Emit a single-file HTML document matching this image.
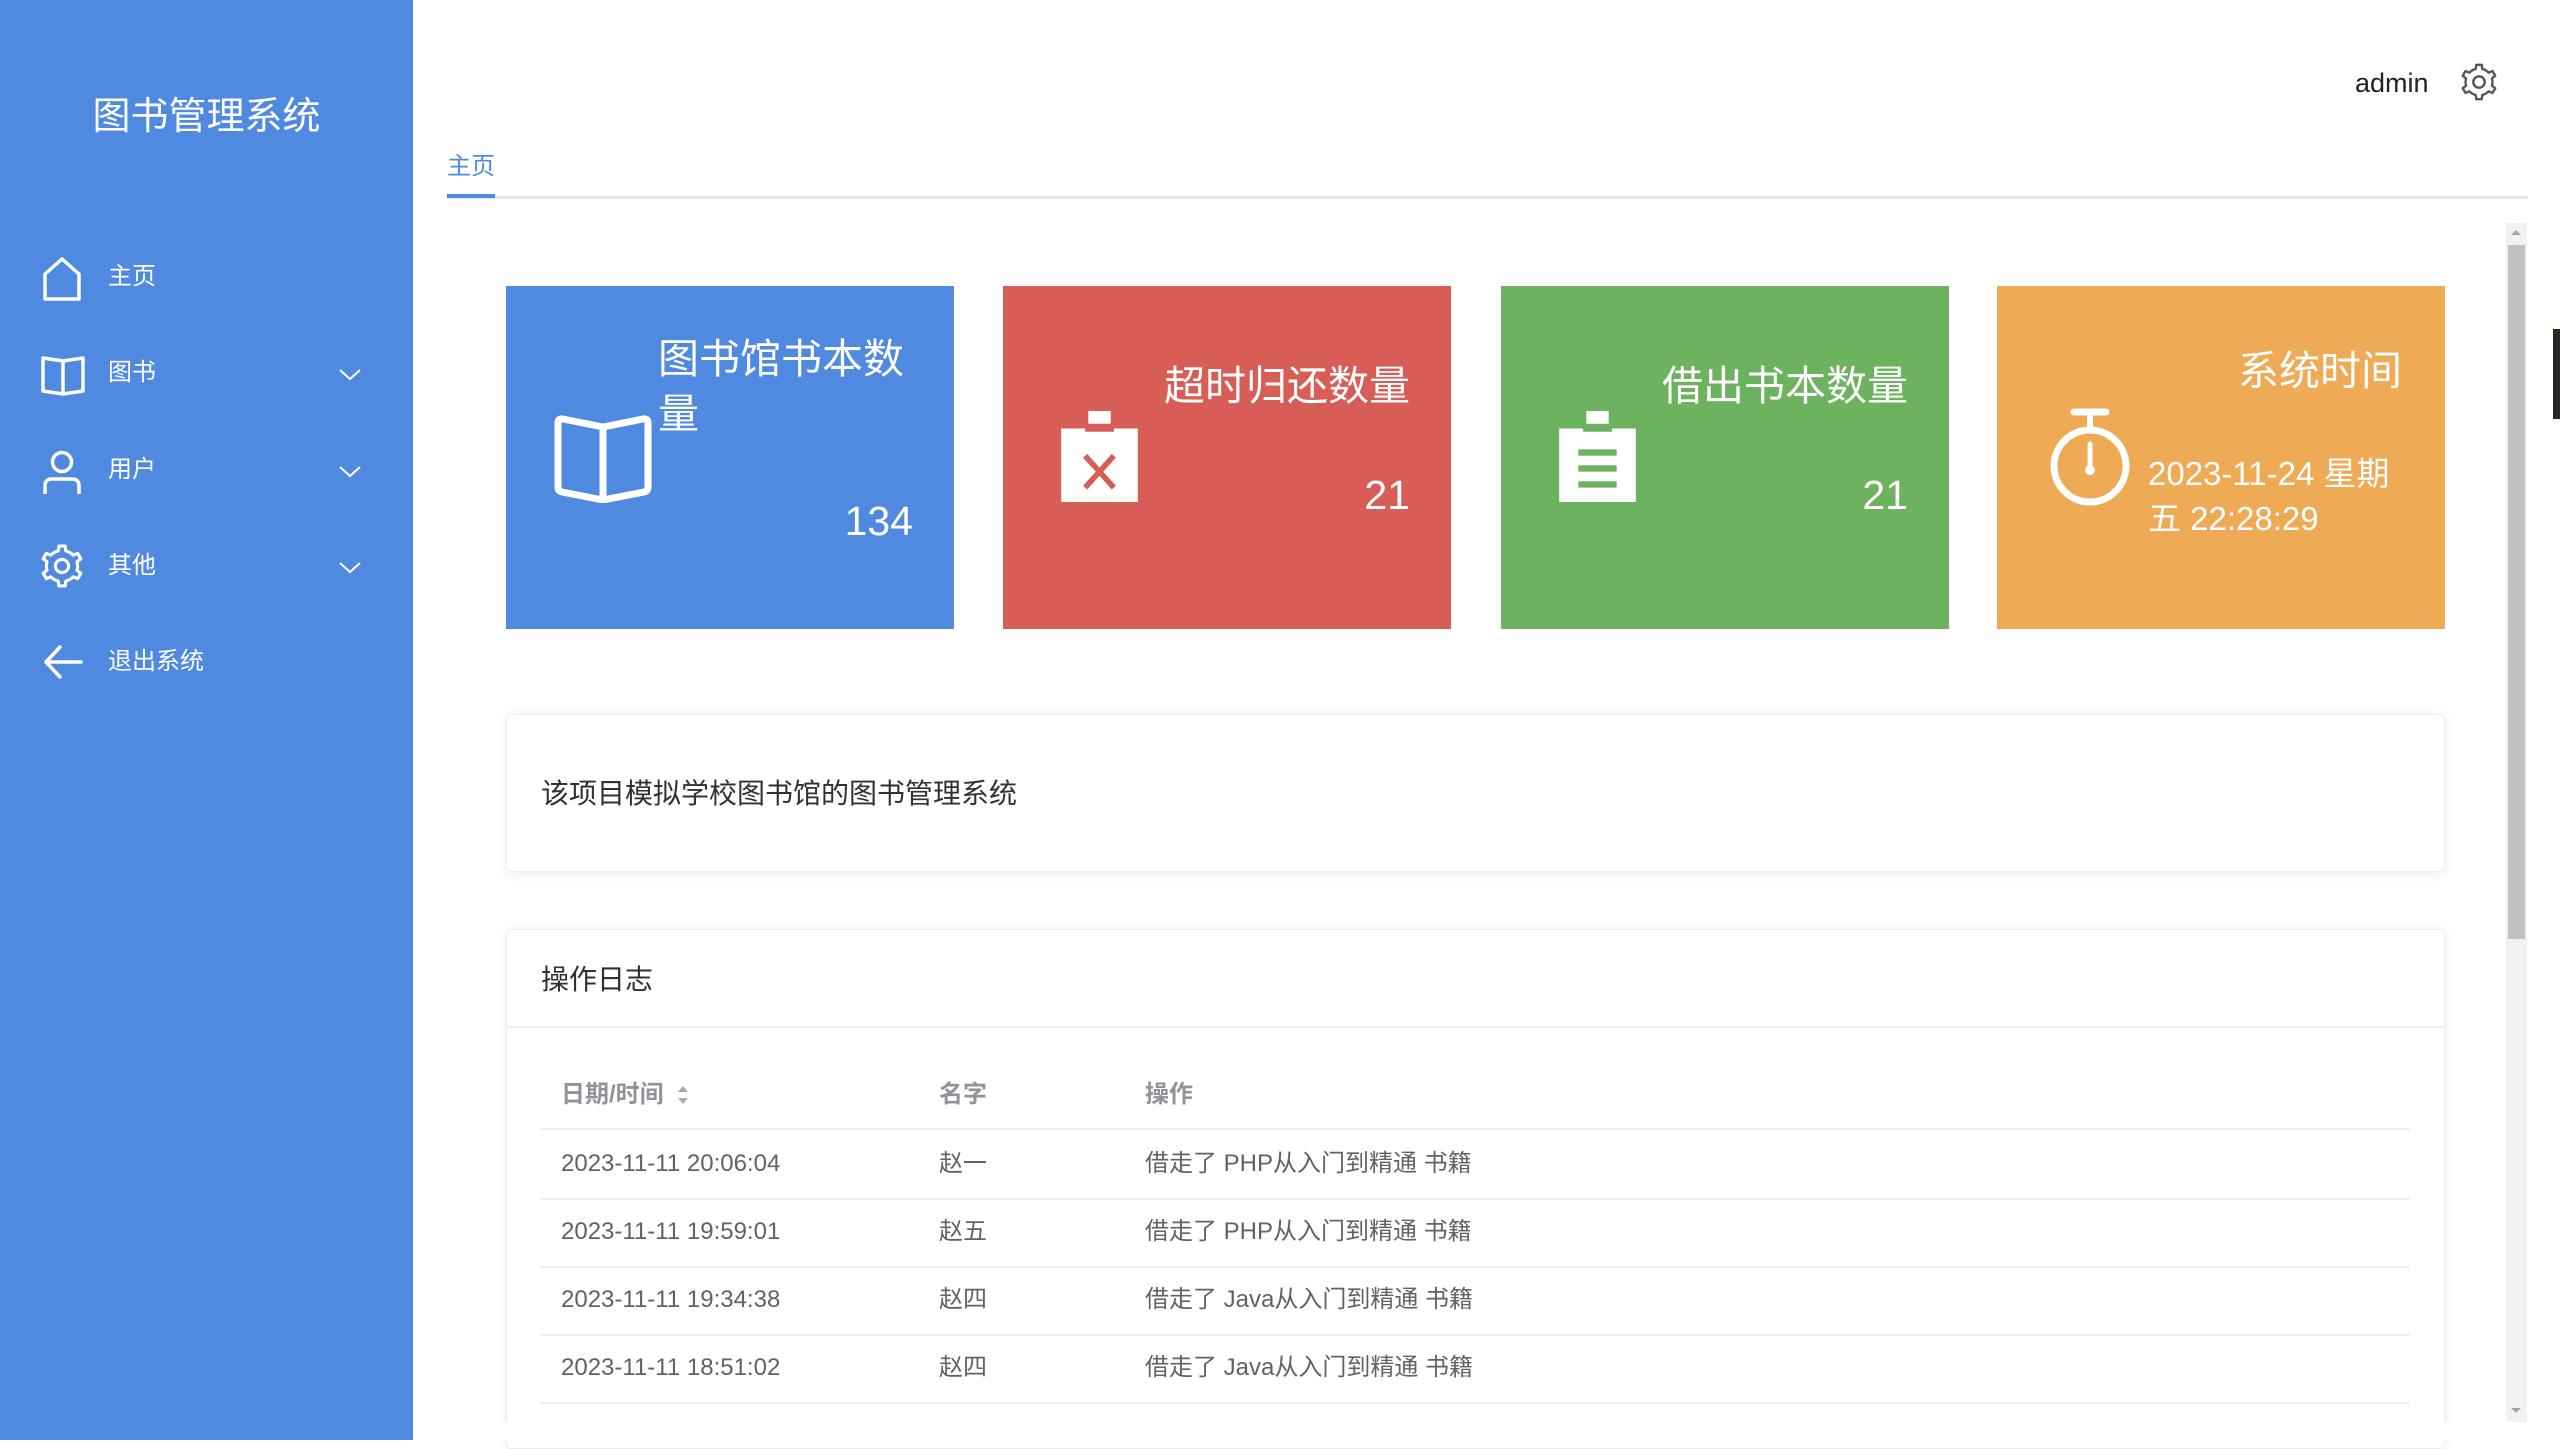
<!DOCTYPE html>
<html><head><meta charset="utf-8">
<style>
*{margin:0;padding:0;box-sizing:border-box}
body{width:2560px;height:1440px;position:relative;overflow:hidden;background:#fff;font-family:"Liberation Sans","Noto Sans CJK SC",sans-serif;}
.a{position:absolute;white-space:nowrap}
#side{position:absolute;left:0;top:0;width:413px;height:1440px;background:#4f8ae0}
.mt{position:absolute;left:108px;color:#fff;font-size:24px;line-height:30px}
.card{position:absolute;top:286px;width:448px;height:343px;color:#fff}
.ct{position:absolute;font-size:41px;line-height:55px;right:41px;text-align:right}
.cn{position:absolute;font-size:41px;line-height:50px;right:41px}
.row{position:absolute;left:541px;width:1869px;height:68px;border-bottom:2px solid #ebeef5;font-size:24px;color:#606266}
.row span{position:absolute;top:17px;line-height:30px;height:30px;display:block}
</style></head><body>
<div id="side">
  <div class="a" style="left:0;width:413px;text-align:center;top:93px;font-size:38px;line-height:48px;color:#fff">图书管理系统</div>
  <svg class="a" style="left:42px;top:256px" width="40" height="46" viewBox="0 0 40 46"><path d="M3 18 L20 3 L37 18 V43 H3 Z" fill="none" stroke="#fff" stroke-width="3.5" stroke-linejoin="round"/></svg>
  <div class="mt" style="top:262px">主页</div>
  <svg class="a" style="left:40px;top:355px" width="46" height="42" viewBox="0 0 46 42"><path d="M3 3 L23 6 L43 3 V36 L23 39 L3 36 Z M23 6 V39" fill="none" stroke="#fff" stroke-width="3.5" stroke-linejoin="round"/></svg>
  <div class="mt" style="top:358px">图书</div>
  <svg class="a" style="left:339px;top:369px" width="22" height="12" viewBox="0 0 22 12"><path d="M1 1 L11 10 L21 1" fill="none" stroke="#fff" stroke-width="2"/></svg>
  <svg class="a" style="left:42px;top:450px" width="40" height="46" viewBox="0 0 40 46"><circle cx="20" cy="12" r="9.5" fill="none" stroke="#fff" stroke-width="3.5"/><path d="M3 44 V36 Q3 29 10 29 H30 Q37 29 37 36 V44" fill="none" stroke="#fff" stroke-width="3.5"/></svg>
  <div class="mt" style="top:455px">用户</div>
  <svg class="a" style="left:339px;top:466px" width="22" height="12" viewBox="0 0 22 12"><path d="M1 1 L11 10 L21 1" fill="none" stroke="#fff" stroke-width="2"/></svg>
  <svg class="a" style="left:40px;top:543px" width="44" height="46" viewBox="0 0 24 24"><path d="M9.94 3.75 L10.28 1.13 L13.72 1.13 L14.06 3.75 A8.5 8.5 0 0 1 18.11 6.09 L20.55 5.08 L22.27 8.05 L20.17 9.66 A8.5 8.5 0 0 1 20.17 14.34 L22.27 15.95 L20.55 18.92 L18.11 17.91 A8.5 8.5 0 0 1 14.06 20.25 L13.72 22.87 L10.28 22.87 L9.94 20.25 A8.5 8.5 0 0 1 5.89 17.91 L3.45 18.92 L1.73 15.95 L3.83 14.34 A8.5 8.5 0 0 1 3.83 9.66 L1.73 8.05 L3.45 5.08 L5.89 6.09 A8.5 8.5 0 0 1 9.94 3.75 Z" fill="none" stroke="#fff" stroke-width="1.7" stroke-linejoin="round"/><circle cx="12" cy="12" r="3.6" fill="none" stroke="#fff" stroke-width="1.7"/></svg>
  <div class="mt" style="top:551px">其他</div>
  <svg class="a" style="left:339px;top:562px" width="22" height="12" viewBox="0 0 22 12"><path d="M1 1 L11 10 L21 1" fill="none" stroke="#fff" stroke-width="2"/></svg>
  <svg class="a" style="left:43px;top:645px" width="40" height="34" viewBox="0 0 40 34"><path d="M38 17 H3 M17 2 L3 17 L17 32" fill="none" stroke="#fff" stroke-width="3.5" stroke-linecap="round" stroke-linejoin="round"/></svg>
  <div class="mt" style="top:647px">退出系统</div>
</div>

<div class="a" style="left:2355px;top:66px;font-size:27px;line-height:34px;color:#222">admin</div>
<svg class="a" style="left:2460px;top:63px" width="38" height="38" viewBox="0 0 24 24"><path d="M9.94 3.75 L10.28 1.13 L13.72 1.13 L14.06 3.75 A8.5 8.5 0 0 1 18.11 6.09 L20.55 5.08 L22.27 8.05 L20.17 9.66 A8.5 8.5 0 0 1 20.17 14.34 L22.27 15.95 L20.55 18.92 L18.11 17.91 A8.5 8.5 0 0 1 14.06 20.25 L13.72 22.87 L10.28 22.87 L9.94 20.25 A8.5 8.5 0 0 1 5.89 17.91 L3.45 18.92 L1.73 15.95 L3.83 14.34 A8.5 8.5 0 0 1 3.83 9.66 L1.73 8.05 L3.45 5.08 L5.89 6.09 A8.5 8.5 0 0 1 9.94 3.75 Z" fill="none" stroke="#555" stroke-width="1.5" stroke-linejoin="round"/><circle cx="12" cy="12" r="3.6" fill="none" stroke="#555" stroke-width="1.5"/></svg>

<div class="a" style="left:447px;top:152px;font-size:24px;line-height:30px;color:#4f8ae0">主页</div>
<div class="a" style="left:447px;top:196px;width:2081px;height:3px;background:#e4e7ed"></div>
<div class="a" style="left:447px;top:194px;width:48px;height:4px;background:#4f8ae0"></div>

<div class="a" style="left:2506px;top:223px;width:21px;height:1199px;background:#f1f1f1"></div>
<div class="a" style="left:2508px;top:245px;width:17px;height:694px;background:#c1c1c1"></div>
<div class="a" style="left:2511px;top:230px;width:0;height:0;border-left:5px solid transparent;border-right:5px solid transparent;border-bottom:5px solid #a3a3a3"></div>
<div class="a" style="left:2511px;top:1408px;width:0;height:0;border-left:5px solid transparent;border-right:5px solid transparent;border-top:5px solid #a3a3a3"></div>
<div class="a" style="left:2553px;top:329px;width:7px;height:90px;background:#2b2622"></div>

<div class="card" style="left:506px;background:#4f8ae0">
  <svg class="a" style="left:47px;top:125px" width="100" height="92" viewBox="0 0 100 92"><path d="M5 12 Q5 7 10 8 L50 16 L90 8 Q95 7 95 12 V76 Q95 80 91 81 L50 89 L9 81 Q5 80 5 76 Z M50 16 V89" fill="none" stroke="#fff" stroke-width="7" stroke-linejoin="round"/></svg>
  <div class="ct" style="left:152px;top:46px;text-align:left;white-space:normal;right:35px">图书馆书本数量</div>
  <div class="cn" style="top:210px">134</div>
</div>
<div class="card" style="left:1003px;background:#d75d56">
  <svg class="a" style="left:58px;top:125px" width="77" height="91" viewBox="0 0 48 57"><rect x="17" y="0" width="14" height="8" fill="#fff"/><path d="M0 11 H15 V13 H33 V11 H48 V57 H0 Z" fill="#fff"/><path d="M15 28 L33 48 M33 28 L15 48" stroke="#d75d56" stroke-width="3.5"/></svg>
  <div class="ct" style="top:73px">超时归还数量</div>
  <div class="cn" style="top:184px">21</div>
</div>
<div class="card" style="left:1501px;background:#6db25e">
  <svg class="a" style="left:58px;top:125px" width="77" height="91" viewBox="0 0 48 57"><rect x="17" y="0" width="14" height="8" fill="#fff"/><path d="M0 11 H15 V13 H33 V11 H48 V57 H0 Z" fill="#fff"/><rect x="12" y="24" width="24" height="4" fill="#6db25e"/><rect x="12" y="34" width="24" height="4" fill="#6db25e"/><rect x="12" y="44" width="24" height="4" fill="#6db25e"/></svg>
  <div class="ct" style="top:73px">借出书本数量</div>
  <div class="cn" style="top:184px">21</div>
</div>
<div class="card" style="left:1997px;background:#eeaa55">
  <div class="ct" style="top:58px;right:43px">系统时间</div>
  <svg class="a" style="left:51px;top:120px" width="84" height="104" viewBox="0 0 84 104"><path d="M26 6 H58" stroke="#fff" stroke-width="7" stroke-linecap="round"/><path d="M42 6 V22" stroke="#fff" stroke-width="6"/><circle cx="42" cy="60" r="36" fill="none" stroke="#fff" stroke-width="7"/><path d="M42 38 V62" stroke="#fff" stroke-width="5" stroke-linecap="round"/><circle cx="42" cy="64" r="5" fill="#fff"/></svg>
  <div class="a" style="left:151px;top:165px;font-size:33px;line-height:45px;white-space:normal;width:265px">2023-11-24 星期五 22:28:29</div>
</div>

<div class="a" style="left:506px;top:714px;width:1939px;height:158px;border:1px solid #ebeef5;border-radius:6px;box-shadow:0 2px 12px rgba(0,0,0,0.08);background:#fff"></div>
<div class="a" style="left:541px;top:776px;font-size:28px;line-height:36px;color:#303133">该项目模拟学校图书馆的图书管理系统</div>

<div class="a" style="left:506px;top:929px;width:1939px;height:520px;border:1px solid #ebeef5;border-radius:6px;box-shadow:0 2px 12px rgba(0,0,0,0.08);background:#fff"></div>
<div class="a" style="left:541px;top:962px;font-size:28px;line-height:36px;color:#303133">操作日志</div>
<div class="a" style="left:507px;top:1026px;width:1937px;height:2px;background:#ebeef5"></div>
<div class="row" style="top:1062px;color:#909399;font-weight:bold">
  <span style="left:20px;top:18px">日期/时间</span>
  <svg class="a" style="left:135px;top:21px" width="14" height="24" viewBox="0 0 14 24"><path d="M7 3 L12 9 H2 Z M7 21 L12 15 H2 Z" fill="#a8abb2"/></svg>
  <span style="left:398px;top:18px">名字</span>
  <span style="left:604px;top:18px">操作</span>
</div>
<div class="row" style="top:1132px"><span style="left:20px">2023-11-11 20:06:04</span><span style="left:398px">赵一</span><span style="left:604px">借走了 PHP从入门到精通 书籍</span></div>
<div class="row" style="top:1200px"><span style="left:20px">2023-11-11 19:59:01</span><span style="left:398px">赵五</span><span style="left:604px">借走了 PHP从入门到精通 书籍</span></div>
<div class="row" style="top:1268px"><span style="left:20px">2023-11-11 19:34:38</span><span style="left:398px">赵四</span><span style="left:604px">借走了 Java从入门到精通 书籍</span></div>
<div class="row" style="top:1336px"><span style="left:20px">2023-11-11 18:51:02</span><span style="left:398px">赵四</span><span style="left:604px">借走了 Java从入门到精通 书籍</span></div>
<div class="a" style="left:413px;top:1422px;width:2090px;height:18px;background:#fff"></div>
</body></html>
